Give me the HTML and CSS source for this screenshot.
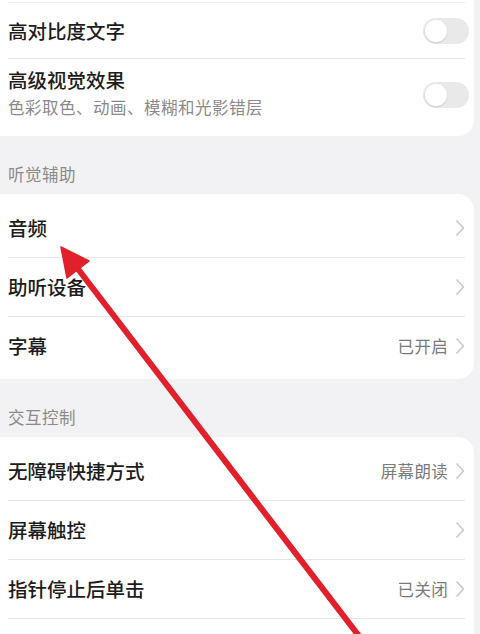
FILE: index.html
```html
<!DOCTYPE html>
<html lang="zh-CN">
<head>
<meta charset="utf-8">
<title>辅助功能</title>
<link rel="stylesheet" href="styles.css">
</head>
<body>
<div class="page">
  <div class="card card-first">
    <div class="row">
      <div class="title">高对比度文字</div>
      <div class="toggle"><span class="knob"></span></div>
    </div>
    <div class="row row-tall">
      <div class="texts">
        <div class="title">高级视觉效果</div>
        <div class="sub">色彩取色、动画、模糊和光影错层</div>
      </div>
      <div class="toggle"><span class="knob"></span></div>
    </div>
  </div>

  <div class="section">听觉辅助</div>
  <div class="card">
    <div class="row">
      <div class="title">音频</div>
      <div class="right"><svg class="chev" viewBox="0 0 10 18"><path d="M2 2 L8.5 9 L2 16"/></svg></div>
    </div>
    <div class="row">
      <div class="title">助听设备</div>
      <div class="right"><svg class="chev" viewBox="0 0 10 18"><path d="M2 2 L8.5 9 L2 16"/></svg></div>
    </div>
    <div class="row">
      <div class="title">字幕</div>
      <div class="right"><span class="value">已开启</span><svg class="chev" viewBox="0 0 10 18"><path d="M2 2 L8.5 9 L2 16"/></svg></div>
    </div>
  </div>

  <div class="section">交互控制</div>
  <div class="card card-last">
    <div class="row">
      <div class="title">无障碍快捷方式</div>
      <div class="right"><span class="value">屏幕朗读</span><svg class="chev" viewBox="0 0 10 18"><path d="M2 2 L8.5 9 L2 16"/></svg></div>
    </div>
    <div class="row">
      <div class="title">屏幕触控</div>
      <div class="right"><svg class="chev" viewBox="0 0 10 18"><path d="M2 2 L8.5 9 L2 16"/></svg></div>
    </div>
    <div class="row">
      <div class="title">指针停止后单击</div>
      <div class="right"><span class="value">已关闭</span><svg class="chev" viewBox="0 0 10 18"><path d="M2 2 L8.5 9 L2 16"/></svg></div>
    </div>
    <div class="row"></div>
  </div>

  <svg class="arrow" viewBox="0 0 480 634" width="480" height="634">
    <line x1="78" y1="269" x2="362" y2="640" />
    <polygon points="61,247 89,261 67,278" />
  </svg>
</div>
</body>
</html>
```

FILE: styles.css
```css
* { box-sizing: border-box; }
html, body {
  margin: 0;
  padding: 0;
  background: #f2f2f4;
}
body {
  font-family: "Noto Sans CJK SC", "Noto Sans", sans-serif;
  color: #1c1c1c;
  width: 480px;
  height: 634px;
  overflow: hidden;
}
.page {
  position: relative;
  width: 480px;
  height: 634px;
  overflow: hidden;
}
.card {
  background: #ffffff;
  margin-right: 6px;
  padding: 4px 9px 4px 8px;
  border-radius: 0 16px 16px 0;
}
.card-first {
  padding-top: 2px;
  border-top-right-radius: 0;
}
.card-first .row:first-child {
  border-top: 1px solid #ececec;
  height: 56px;
}
.card-last {
  border-bottom-right-radius: 0;
}
.row {
  height: 59px;
  display: flex;
  align-items: center;
  justify-content: space-between;
}
.row + .row {
  border-top: 1px solid #e6e6e6;
}
.row-tall {
  height: 74px;
  align-items: flex-start;
  padding-top: 8px;
}
.card-first .row-tall { height: 74px; }
.title {
  font-size: 19.5px;
  font-weight: 500;
  line-height: 26px;
  letter-spacing: 0;
}
.sub {
  font-size: 16.5px;
  line-height: 22px;
  color: #8a8a8a;
  letter-spacing: 0.5px;
  margin-top: 3px;
}
.section {
  height: 58px;
  padding: 28px 0 10px 8px;
  font-size: 16.5px;
  line-height: 20px;
  color: #8a8a8a;
  letter-spacing: 0.5px;
}
.right {
  display: flex;
  align-items: center;
  gap: 7px;
}
.value {
  font-size: 16.5px;
  color: #7a7a7a;
  letter-spacing: 0.3px;
  line-height: 22px;
}
.chev {
  width: 10px;
  height: 18px;
  display: block;
}
.chev path {
  fill: none;
  stroke: #c9c9c9;
  stroke-width: 1.7;
  stroke-linecap: round;
  stroke-linejoin: round;
}
.toggle {
  width: 46px;
  height: 26px;
  border-radius: 13px;
  background: #e9e9e9;
  margin-right: -4px;
  position: relative;
  flex: none;
}
.row-tall .toggle {
  margin-top: 15px;
}
.knob {
  position: absolute;
  left: 2px;
  top: 2px;
  width: 22px;
  height: 22px;
  border-radius: 50%;
  background: #ffffff;
  box-shadow: 0 1px 2px rgba(0,0,0,0.12);
}
.arrow {
  position: absolute;
  left: 0;
  top: 0;
  pointer-events: none;
}
.arrow line {
  stroke: #e1202b;
  stroke-width: 6;
  stroke-linecap: round;
}
.arrow polygon {
  fill: #e1202b;
  stroke: #e1202b;
  stroke-width: 1.5;
  stroke-linejoin: round;
}
```
